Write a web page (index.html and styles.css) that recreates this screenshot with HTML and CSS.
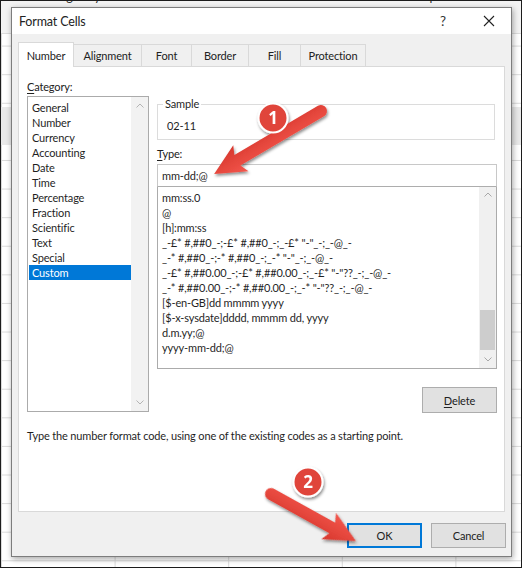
FILE: index.html
```html
<!DOCTYPE html>
<html>
<head>
<meta charset="utf-8">
<title>Format Cells</title>
<link rel="stylesheet" href="styles.css">
</head>
<body>
<div class="screen">
  <div class="ribbon">
    <span class="rt r1">Insert</span>
    <span class="rt r2">Page Layout</span>
    <span class="rt r3">Formulas</span>
    <span class="rt r4">Data</span>
    <span class="rt r5">Review</span>
    <span class="rt r6">View</span>
    <span class="rt r7">Help</span>
  </div>
  <div class="dialog">
    <div class="titlebar">
      <span class="title">Format Cells</span>
      <span class="help">?</span>
      <svg class="close" width="12" height="12" viewBox="0 0 12 12"><path d="M1 1L11 11M11 1L1 11" stroke="#222" stroke-width="1.1" fill="none"/></svg>
    </div>
    <div class="tabs">
      <div class="tab active">Number</div>
      <div class="tab w-align">Alignment</div>
      <div class="tab w-font">Font</div>
      <div class="tab w-border">Border</div>
      <div class="tab w-fill">Fill</div>
      <div class="tab w-prot">Protection</div>
    </div>
    <div class="panel">
      <div class="left">
        <div class="label"><u>C</u>ategory:</div>
        <div class="catlist">
          <ul class="items">
            <li>General</li>
            <li>Number</li>
            <li>Currency</li>
            <li>Accounting</li>
            <li>Date</li>
            <li>Time</li>
            <li>Percentage</li>
            <li>Fraction</li>
            <li>Scientific</li>
            <li>Text</li>
            <li>Special</li>
            <li class="sel">Custom</li>
          </ul>
          <div class="vscroll">
            <svg class="arr" width="8" height="5" viewBox="0 0 8 5"><path d="M0.5 4.5L4 1L7.5 4.5" stroke="#b4b4b4" fill="none"/></svg>
            <svg class="arr" width="8" height="5" viewBox="0 0 8 5"><path d="M0.5 0.5L4 4L7.5 0.5" stroke="#b4b4b4" fill="none"/></svg>
          </div>
        </div>
      </div>
      <div class="right">
        <div class="sample">
          <span class="legend">Sample</span>
          <div class="sample-val">02-11</div>
        </div>
        <div class="label type-label"><u>T</u>ype:</div>
        <div class="typeinput">mm-dd;@</div>
        <div class="typelist">
          <ul class="items codes">
            <li>mm:ss.0</li>
            <li>@</li>
            <li>[h]:mm:ss</li>
            <li>_-£* #,##0_-;-£* #,##0_-;_-£* "-"_-;_-@_-</li>
            <li>_-* #,##0_-;-* #,##0_-;_-* "-"_-;_-@_-</li>
            <li>_-£* #,##0.00_-;-£* #,##0.00_-;_-£* "-"??_-;_-@_-</li>
            <li>_-* #,##0.00_-;-* #,##0.00_-;_-* "-"??_-;_-@_-</li>
            <li>[$-en-GB]dd mmmm yyyy</li>
            <li>[$-x-sysdate]dddd, mmmm dd, yyyy</li>
            <li>d.m.yy;@</li>
            <li>yyyy-mm-dd;@</li>
          </ul>
          <div class="vscroll wide">
            <svg class="arr" width="8" height="5" viewBox="0 0 8 5"><path d="M0.5 4.5L4 1L7.5 4.5" stroke="#a8a8a8" fill="none"/></svg>
            <div class="track"><div class="thumb"></div></div>
            <svg class="arr" width="8" height="5" viewBox="0 0 8 5"><path d="M0.5 0.5L4 4L7.5 0.5" stroke="#a8a8a8" fill="none"/></svg>
          </div>
        </div>
        <div class="delete-row"><button class="btn del"><u>D</u>elete</button></div>
      </div>
      <p class="hint">Type the number format code, using one of the existing codes as a starting point.</p>
    </div>
    <div class="footer">
      <button class="btn ok">OK</button>
      <button class="btn">Cancel</button>
    </div>
  </div>

  <svg class="annot" width="522" height="568" viewBox="0 0 522 568">
    <defs>
      <linearGradient id="rg" x1="0" y1="0" x2="0" y2="1">
        <stop offset="0" stop-color="#f4574d"/>
        <stop offset="1" stop-color="#d7372d"/>
      </linearGradient>
      <filter id="sh" x="-30%" y="-30%" width="160%" height="160%">
        <feDropShadow dx="1" dy="2" stdDeviation="1.6" flood-color="#000" flood-opacity="0.45"/>
      </filter>
    </defs>
    <g filter="url(#sh)">
      <g transform="translate(321 111) rotate(149.5)">
        <path d="M0 -6 L97 -6 L93 -15 L124 0 L93 15 L97 6 L0 6 A6 6 0 0 1 0 -6 Z" fill="url(#rg)"/>
      </g>
      <g transform="translate(271 494) rotate(29)">
        <path d="M0 -6 L70 -6 L66 -15 L97 0 L66 15 L70 6 L0 6 A6 6 0 0 1 0 -6 Z" fill="url(#rg)"/>
      </g>
      <circle cx="273" cy="118" r="14.5" fill="#e0443a" stroke="#fff" stroke-width="2"/>
      <circle cx="308" cy="482" r="14.5" fill="#e0443a" stroke="#fff" stroke-width="2"/>
    </g>
    <text x="273" y="124" class="num">1</text>
    <text x="308" y="488" class="num">2</text>
  </svg>
</div>
</body>
</html>
```

FILE: styles.css
```css
* { box-sizing: border-box; }
html, body { margin: 0; padding: 0; }
body {
  width: 522px;
  height: 568px;
  overflow: hidden;
  font-family: "Lato", "Open Sans", sans-serif;
  font-size: 11px;
  letter-spacing: -0.15px;
  color: #1f1f1f;
}
.screen {
  position: relative;
  width: 522px;
  height: 568px;
  border: 1px solid #1c1c1c;
  overflow: hidden;
  background-color: #fff;
  background-image:
    linear-gradient(#f3f3f3, #f3f3f3),
    linear-gradient(#dcdcdc, #dcdcdc),
    linear-gradient(#e9e9e9, #e9e9e9),
    linear-gradient(#dadada 1px, transparent 1px),
    linear-gradient(90deg, #dadada 1px, transparent 1px);
  background-size: 100% 32px, 100% 1px, 100% 38px, 100% 28.6px, 113.6px 100%;
  background-position: 0 0, 0 32px, 0 106px, 0 16px, 0 0;
  background-repeat: no-repeat, no-repeat, no-repeat, repeat, repeat;
}
.ribbon {
  height: 6px;
  overflow: hidden;
  position: relative;
  font-size: 12.5px;
  color: #333;
}
.rt { position: absolute; top: -12px; line-height: 16px; }
.r1 { left: -22px; }
.r2 { left: 52px; }
.r3 { left: 152px; }
.r4 { left: 234px; }
.r5 { left: 289px; }
.r6 { left: 361px; }
.r7 { left: 410px; }

.dialog {
  margin-left: 10px;
  width: 501px;
  height: 550px;
  background: #f0f0f0;
  border: 1px solid #7d7d7d;
  box-shadow: 1px 2px 6px rgba(0,0,0,0.35);
  display: flex;
  flex-direction: column;
}
.titlebar {
  height: 26px;
  background: #fff;
  display: flex;
  align-items: center;
  padding-left: 7px;
  font-size: 12.5px;
  color: #222;
  flex: none;
}
.title { flex: 1; }
.help { font-size: 13.5px; margin-right: 37px; color: #333; }
.close { margin-right: 16px; }

.tabs {
  height: 32px;
  flex: none;
  display: flex;
  align-items: flex-end;
  padding-left: 6px;
  position: relative;
  z-index: 2;
}
.tab {
  height: 22px;
  border: 1px solid #d9d9d9;
  border-bottom: none;
  border-left: none;
  display: flex;
  align-items: center;
  justify-content: center;
  color: #222;
  background: #f0f0f0;
}
.tab.active {
  width: 56px;
  background: #fff;
  border-left: 1px solid #d9d9d9;
  margin-bottom: -1px;
  height: 25px;
}
.w-align { width: 68px; }
.w-font { width: 50px; }
.w-border { width: 57px; }
.w-fill { width: 52px; }
.w-prot { width: 65px; }

.panel {
  margin: 0 6px;
  height: 446px;
  flex: none;
  background: #fff;
  border: 1px solid #d9d9d9;
  display: grid;
  grid-template-columns: 122px 340px;
  column-gap: 8px;
  align-content: start;
  padding: 12px 0 0 8px;
}
.label { line-height: 16px; color: #222; }
.label u { text-decoration-thickness: 1px; text-underline-offset: 2px; }
.items { list-style: none; margin: 0; padding: 0; flex: 1; }
.items li { line-height: 15px; white-space: nowrap; }

.catlist {
  margin-top: 1px;
  height: 316px;
  border: 1px solid #ababab;
  display: flex;
}
.catlist .items { padding: 3px 0 0 1px; }
.catlist li { padding-left: 3px; }
.catlist li.sel { background: #0078d7; color: #fff; }
.vscroll {
  width: 17px;
  flex: none;
  background: #f0f0f0;
  display: flex;
  flex-direction: column;
  align-items: center;
  justify-content: space-between;
  padding: 6px 0 6px;
}
.catlist .vscroll { background: #f2f2f2; }

.right { display: flex; flex-direction: column; }
.sample {
  margin-top: 25px;
  width: 338px;
  height: 36px;
  border: 1px solid #dcdcdc;
  position: relative;
  padding: 13px 0 0 9px;
}
.legend {
  position: absolute;
  top: -9px;
  left: 5px;
  background: #fff;
  padding: 0 2px;
  line-height: 16px;
}
.sample-val { line-height: 16px; }
.type-label { margin-top: 6px; }
.typeinput {
  margin-top: 2px;
  height: 23px;
  border: 1px solid #c8c8c8;
  border-bottom-color: #adadad;
  padding-left: 4px;
  line-height: 21px;
}
.typelist {
  height: 182px;
  border: 1px solid #ababab;
  border-top: none;
  display: flex;
}
.codes { padding: 3px 0 0 4px; }
.vscroll.wide { width: 17px; padding: 5px 0 6px; }
.track { flex: 1; width: 100%; display: flex; flex-direction: column; justify-content: flex-end; padding: 0 0 7px; }
.thumb { height: 40px; background: #cdcdcd; margin: 0 1px; }

.delete-row { display: flex; justify-content: flex-end; margin-top: 18px; }
.btn {
  font: inherit;
  letter-spacing: inherit;
  color: #222;
  background: #e1e1e1;
  border: 1px solid #adadad;
  height: 26px;
  width: 75px;
  padding: 0;
}
.btn u { text-decoration-thickness: 1px; text-underline-offset: 2px; }
.hint {
  grid-column: 1 / 3;
  margin: 15px 0 0;
  line-height: 16px;
}
.footer {
  flex: 1;
  display: flex;
  justify-content: flex-end;
  align-items: flex-start;
  gap: 9px;
  padding: 11px 5px 0 0;
}
.footer .btn { height: 25px; width: 75px; }
.btn.ok { border: 1px solid #0078d7; box-shadow: inset 0 0 0 1px #0078d7; }

.annot { position: absolute; left: -1px; top: -1px; pointer-events: none; }
.num {
  font-family: "Open Sans", "Noto Sans", sans-serif;
  font-weight: 700;
  font-size: 17px;
  fill: #fff;
  text-anchor: middle;
}
```
